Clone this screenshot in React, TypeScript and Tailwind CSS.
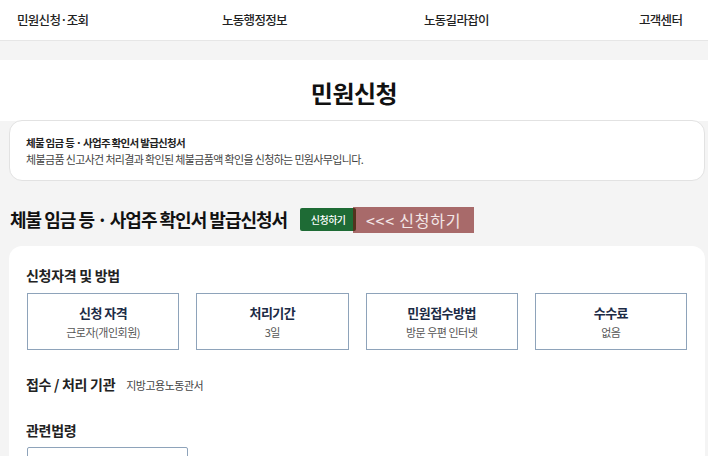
import { ExternalLink } from 'lucide-react';

const font = { fontFamily: '"Noto Sans CJK KR", "Noto Sans", sans-serif' };

const navItems = ['민원신청·조회', '노동행정정보', '노동길라잡이', '고객센터'];

const infoBoxes = [
  { title: '신청 자격', value: '근로자(개인회원)' },
  { title: '처리기간', value: '3일' },
  { title: '민원접수방법', value: '방문 우편 인터넷' },
  { title: '수수료', value: '없음' },
];

export default function App() {
  return (
    <div className="w-[708px] h-[456px] overflow-hidden bg-[#f4f4f4] text-[#222]" style={font}>
      {/* top nav */}
      <header className="h-[41px] bg-white border-b border-[#e6e6e6] flex items-center pl-[17px]">
        <span className="w-[205px] text-[12.5px] font-medium tracking-[-0.7px]">{navItems[0]}</span>
        <span className="w-[202px] text-[12.5px] font-medium tracking-[-0.7px]">{navItems[1]}</span>
        <span className="w-[215px] text-[12.5px] font-medium tracking-[-0.7px]">{navItems[2]}</span>
        <span className="text-[12.5px] font-medium tracking-[-0.7px]">{navItems[3]}</span>
      </header>

      <div className="h-[19px]" />

      {/* page title */}
      <div className="bg-white h-[61px] flex items-center justify-center">
        <h1 className="text-[24px] font-bold tracking-[-0.5px] text-[#111] mt-[4px]">민원신청</h1>
      </div>

      <div className="pl-[9px] pr-[3px] -mt-[1px]">
        <div className="bg-white border border-[#e2e2e2] rounded-[13px] h-[61px] px-[16px] flex flex-col justify-center">
          <p className="text-[10.5px] font-bold text-[#222] leading-[17px] tracking-[-0.7px]">체불 임금 등 · 사업주 확인서 발급신청서</p>
          <p className="text-[11px] text-[#444] leading-[17px] tracking-[-0.65px]">체불금품 신고사건 처리결과 확인된 체불금품액 확인을 신청하는 민원사무입니다.</p>
        </div>

        {/* form heading */}
        <div className="flex items-center mt-[25px] h-[26px] pl-[1px]">
          <h2 className="text-[18px] font-bold tracking-[-1px] text-[#111]">체불 임금 등 · 사업주 확인서 발급신청서</h2>
          <div className="relative ml-[13px]">
            <button className="bg-[#1e6b35] text-white text-[10px] font-medium h-[23px] w-[56px] rounded-[2px] flex items-center justify-center tracking-[-0.5px]">
              신청하기
            </button>
            <div className="absolute left-[53px] -top-[1px] h-[26px] w-[121px] bg-[#750d0d]/60 flex items-center justify-center text-[16px] text-[#f3e6e6] tracking-[0.8px] whitespace-nowrap">
              &lt;&lt;&lt; 신청하기
            </div>
          </div>
        </div>

        {/* main card */}
        <div className="bg-white rounded-[13px] mt-[14px] h-[300px] px-[17px] pt-[17px]">
          <h3 className="text-[14px] font-bold tracking-[-0.3px] text-[#222] leading-[24px]">신청자격 및 방법</h3>
          <div className="grid grid-cols-4 gap-x-[17px] mt-[6px] px-[1px]">
            {infoBoxes.map((box) => (
              <div
                key={box.title}
                className="h-[57px] border-[1.5px] border-[#8ea3ba] flex flex-col items-center justify-center"
              >
                <span className="text-[13px] font-bold text-[#1c2b45] leading-[19px] tracking-[-0.5px]">{box.title}</span>
                <span className="text-[11px] text-[#555] leading-[17px] mt-[2px] tracking-[-0.5px]">{box.value}</span>
              </div>
            ))}
          </div>

          <div className="flex items-baseline mt-[22px]">
            <h3 className="text-[14px] font-bold tracking-[-0.3px] text-[#222] leading-[24px]">접수 / 처리 기관</h3>
            <span className="text-[11px] text-[#444] ml-[11px] tracking-[-0.5px]">지방고용노동관서</span>
          </div>

          <h3 className="text-[14px] font-bold tracking-[-0.3px] text-[#222] leading-[24px] mt-[22px]">관련법령</h3>
          <div className="mt-[5px] ml-[1px] w-[161px] h-[30px] border-[1.5px] border-[#8ea3ba] rounded-[2px] flex items-center px-[8px] gap-[4px]">
            <span className="text-[11px] text-[#333] tracking-[-0.5px] whitespace-nowrap">임금채권보장법 시행규칙 제6조</span>
            <ExternalLink className="w-[11px] h-[11px] text-[#1c2b45]" />
          </div>
        </div>
      </div>
    </div>
  );
}
